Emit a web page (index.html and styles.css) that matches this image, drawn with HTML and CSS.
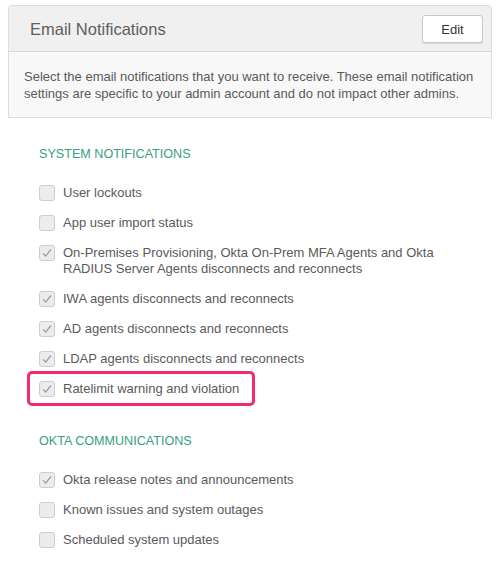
FILE: index.html
```html
<!DOCTYPE html>
<html>
<head>
<meta charset="utf-8">
<link rel="stylesheet" href="styles.css">
</head>
<body>
<div class="panel">
  <div class="panel-head">
    <h2 class="title">Email Notifications</h2>
    <button class="btn">Edit</button>
  </div>
  <div class="panel-desc">Select the email notifications that you want to receive. These email notification settings are specific to your admin account and do not impact other admins.</div>
</div>

<div class="content">
  <h3 class="section">SYSTEM NOTIFICATIONS</h3>
  <div class="list">
    <div class="row"><span class="cb"></span><span class="label">User lockouts</span></div>
    <div class="row"><span class="cb"></span><span class="label">App user import status</span></div>
    <div class="row"><span class="cb checked"><svg viewBox="0 0 16 16"><polyline points="3.5,8.5 6.5,11.5 12.5,4"/></svg></span><span class="label">On-Premises Provisioning, Okta On-Prem MFA Agents and Okta RADIUS Server Agents disconnects and reconnects</span></div>
    <div class="row"><span class="cb checked"><svg viewBox="0 0 16 16"><polyline points="3.5,8.5 6.5,11.5 12.5,4"/></svg></span><span class="label">IWA agents disconnects and reconnects</span></div>
    <div class="row"><span class="cb checked"><svg viewBox="0 0 16 16"><polyline points="3.5,8.5 6.5,11.5 12.5,4"/></svg></span><span class="label">AD agents disconnects and reconnects</span></div>
    <div class="row"><span class="cb checked"><svg viewBox="0 0 16 16"><polyline points="3.5,8.5 6.5,11.5 12.5,4"/></svg></span><span class="label">LDAP agents disconnects and reconnects</span></div>
    <div class="highlight">
      <div class="row"><span class="cb checked"><svg viewBox="0 0 16 16"><polyline points="3.5,8.5 6.5,11.5 12.5,4"/></svg></span><span class="label">Ratelimit warning and violation</span></div>
    </div>
  </div>

  <h3 class="section section-2">OKTA COMMUNICATIONS</h3>
  <div class="list">
    <div class="row"><span class="cb checked"><svg viewBox="0 0 16 16"><polyline points="3.5,8.5 6.5,11.5 12.5,4"/></svg></span><span class="label">Okta release notes and announcements</span></div>
    <div class="row"><span class="cb"></span><span class="label">Known issues and system outages</span></div>
    <div class="row"><span class="cb"></span><span class="label">Scheduled system updates</span></div>
  </div>
</div>
</body>
</html>
```

FILE: styles.css
```css
* { box-sizing: border-box; }
html, body { background: #fff; }
body {
  margin: 0;
  padding: 5px 6px 0 8px;
  font-family: "Liberation Sans", Arial, sans-serif;
  color: #5a5a5a;
  font-size: 13px;
}
.panel {
  border: 1px solid #dcdcdc;
  border-radius: 4px 4px 0 0;
  overflow: hidden;
}
.panel-head {
  background: #f0f0f0;
  border-bottom: 1px solid #d8d8d8;
  height: 46px;
  display: flex;
  align-items: center;
  justify-content: space-between;
  padding: 0 8px 0 21px;
}
.title {
  margin: 0;
  font-weight: normal;
  font-size: 16.5px;
  color: #5e5e5e;
  line-height: 20px;
}
.btn {
  width: 61px;
  height: 28px;
  margin-top: 1px;
  background: #fff;
  border: 1px solid #c8c8c8;
  border-radius: 3px;
  box-shadow: 0 1px 0 #d8d8d8;
  font-family: inherit;
  font-size: 13px;
  color: #333;
  padding: 0;
}
.panel-desc {
  background: #f8f8f8;
  padding: 16px 14px 15px 15px;
  line-height: 17px;
  color: #5a5a5a;
}
.content {
  padding: 28px 0 0 31px;
}
.section {
  margin: 0;
  font-weight: normal;
  font-size: 12.6px;
  line-height: 16px;
  color: #3a9e82;
}
.section-2 { margin-top: 27px; }
.list {
  margin-top: 23px;
  display: flex;
  flex-direction: column;
  gap: 14px;
  align-items: flex-start;
}
.row {
  display: flex;
  align-items: flex-start;
  gap: 8px;
  max-width: 400px;
}
.cb {
  flex: none;
  width: 16px;
  height: 16px;
  border: 1px solid #cdcdcd;
  border-radius: 3px;
  background: #ececec;
  display: flex;
}
.cb svg {
  width: 14px;
  height: 14px;
  fill: none;
  stroke: #9a9a9a;
  stroke-width: 1.4;
}
.label {
  line-height: 16px;
  color: #5a5a5a;
}
.highlight {
  margin: -10px 0 0 -12px;
  border: 3px solid #f42a6e;
  border-radius: 5px;
  padding: 7px 13px 6px 9px;
}
```
